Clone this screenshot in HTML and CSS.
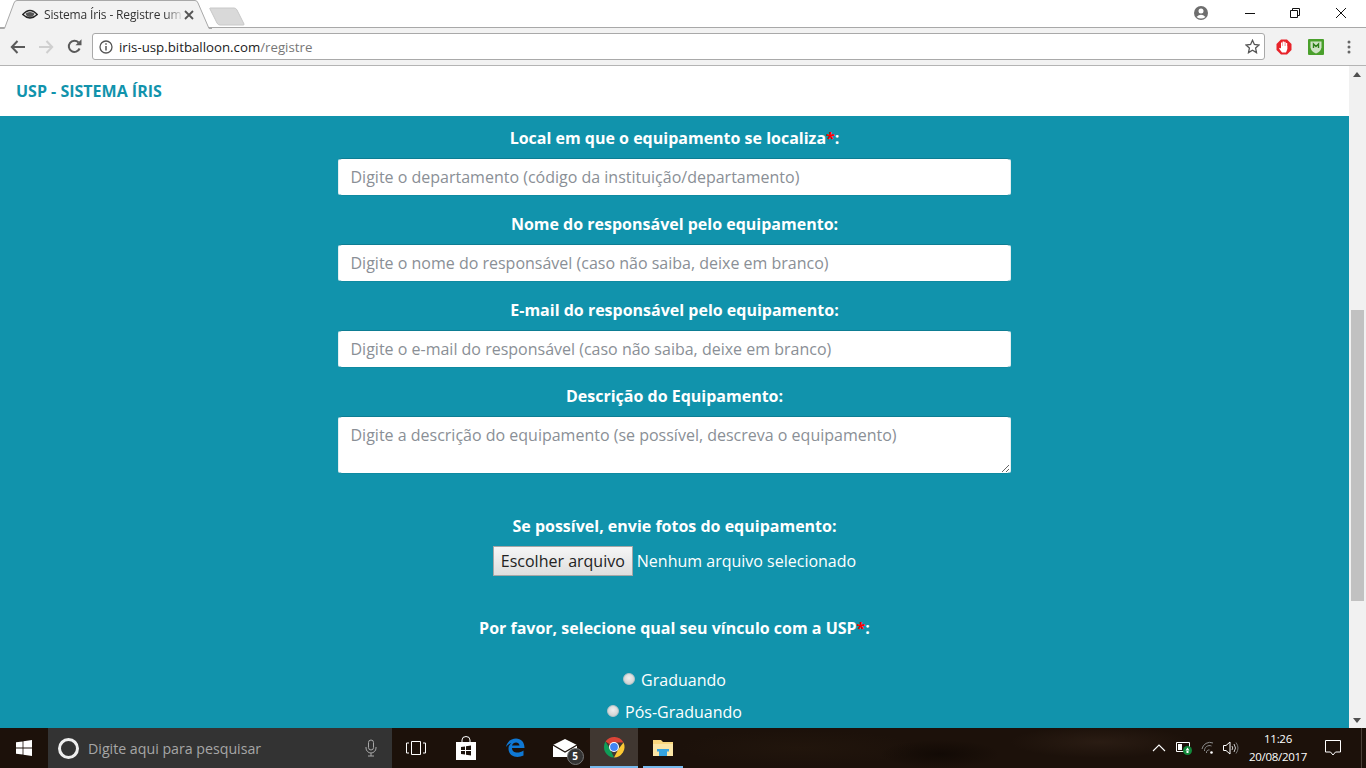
FILE: index.html
```html
<!DOCTYPE html>
<html lang="pt-BR">
<head>
  <meta charset="UTF-8">
  <title>Sistema Íris - Registre um equipamento</title>
  <link rel="stylesheet" href="styles.css">
</head>
<body>
  <header class="chrome">
    <div class="tabstrip">
      <div class="tab">
        <svg class="tab-shape" width="212" height="29" viewBox="0 0 212 29"><path d="M0 28.500h4.500L14 3q.8-2.500 3-2.500h178q2.200 0 3 2.500l11 25.500h3" fill="#f2f2f2" stroke="#a8a8a8"/></svg>
        <svg class="favicon" width="16" height="11" viewBox="0 0 16 11"><path d="M.8 5.500q7.200-8 14.400 0q-7.200 7-14.400 0z" fill="none" stroke="#222" stroke-width="1.400"/><path d="M3.500 4.500q4.500-3 9 0q-1 3.500-4.500 3.500t-4.500-3.500z" fill="#555"/></svg>
        <span class="tab-title">Sistema Íris - Registre um</span>
        <svg class="tab-close" width="10" height="10" viewBox="0 0 10 10"><path d="M1 1l8 8M9 1l-8 8" stroke="#555" stroke-width="1.800"/></svg>
      </div>
      <svg class="newtab" width="36" height="19" viewBox="0 0 36 19"><path d="M1 1h24q2 0 3 2l7 14q.5 1-1 1H11q-2 0-3-2L1 2q-.5-1 0-1z" fill="#d9d9d9" stroke="#c8c8c8"/></svg>
      <div class="win-controls">
        <svg class="win-user" width="16" height="16" viewBox="0 0 16 16"><circle cx="8" cy="8" r="7" fill="#6e6e6e"/><circle cx="8" cy="6" r="2.500" fill="#fff"/><path d="M3.500 12q4.500-4.500 9 0q-4.500 3-9 0z" fill="#fff"/></svg>
        <svg class="win-btn" width="10" height="10" viewBox="0 0 10 10"><path d="M0 5.500h10" stroke="#111"/></svg>
        <svg class="win-btn" width="10" height="10" viewBox="0 0 10 10"><path d="M.5 2.500h7v7h-7zM2.500 2.500v-2h7v7h-2" fill="none" stroke="#111"/></svg>
        <svg class="win-btn win-close" width="10" height="10" viewBox="0 0 10 10"><path d="M0 0l10 10M10 0L0 10" stroke="#111"/></svg>
      </div>
    </div>
    <div class="toolbar">
      <svg class="nav-icon" width="16" height="14" viewBox="0 0 16 14"><path d="M15 7H2M7.500 1L1.800 7l5.700 6" fill="none" stroke="#5a5a5a" stroke-width="2"/></svg>
      <svg class="nav-icon" width="16" height="14" viewBox="0 0 16 14"><path d="M1 7h13M8.500 1l5.700 6-5.700 6" fill="none" stroke="#cfcfcf" stroke-width="2"/></svg>
      <svg class="nav-icon nav-reload" width="15" height="15" viewBox="0 0 15 15"><path d="M12.600 9.500A5.600 5.600 0 1 1 11.500 3.500" fill="none" stroke="#5a5a5a" stroke-width="2"/><path d="M8.500 6.300h6v-6z" fill="#5a5a5a"/></svg>
      <div class="omnibox">
        <svg class="info-icon" width="14" height="14" viewBox="0 0 14 14"><circle cx="7" cy="7" r="6" fill="none" stroke="#555" stroke-width="1.300"/><path d="M7 6v4.500M7 3.300v1.500" stroke="#555" stroke-width="1.500"/></svg>
        <span class="url">iris-usp.bitballoon.com<span class="url-path">/registre</span></span>
        <svg class="star" width="15" height="15" viewBox="0 0 15 15"><path d="M7.500 1.300l1.900 4.200 4.600.5-3.400 3.100.9 4.500-4-2.300-4 2.300.9-4.500L1 6l4.600-.5z" fill="none" stroke="#555" stroke-width="1.300"/></svg>
      </div>
      <svg class="ext-stop" width="16" height="16" viewBox="0 0 16 16"><path d="M5 .5h6L15.500 5v6L11 15.500H5L.5 11V5z" fill="#e8232a"/><rect x="5" y="3.500" width="1.400" height="6" fill="#fff"/><rect x="6.600" y="2.500" width="1.400" height="6" fill="#fff"/><rect x="8.200" y="2.800" width="1.400" height="6" fill="#fff"/><rect x="9.800" y="4" width="1.400" height="6" fill="#fff"/><path d="M5 7h6.200v3.500L10 13.500H6L3 9.500l1-.8L5 9.500z" fill="#fff"/></svg>
      <svg class="ext-shield" width="16" height="16" viewBox="0 0 16 16"><rect width="16" height="16" rx="1" fill="#4aa02c"/><path d="M2.500 2.500h11v6q-1 4.500-5.500 6q-4.500-1.500-5.500-6z" fill="#cfe3c6"/><path d="M5.500 9V5l2.500 2.500L10.500 5v4" fill="none" stroke="#2f7f1c" stroke-width="1.400"/></svg>
      <svg class="menu-dots" width="4" height="14" viewBox="0 0 4 14"><circle cx="2" cy="2" r="1.500" fill="#666"/><circle cx="2" cy="7" r="1.500" fill="#666"/><circle cx="2" cy="12" r="1.500" fill="#666"/></svg>
    </div>
  </header>

  <div class="viewport">
    <main class="page">
      <nav class="navbar"><a class="brand" href="#">USP - SISTEMA ÍRIS</a></nav>
      <form class="register">
        <div class="field">
          <label>Local em que o equipamento se localiza<span class="req">*</span>:</label>
          <input class="form-control" type="text" placeholder="Digite o departamento (código da instituição/departamento)">
        </div>
        <div class="field">
          <label>Nome do responsável pelo equipamento:</label>
          <input class="form-control" type="text" placeholder="Digite o nome do responsável (caso não saiba, deixe em branco)">
        </div>
        <div class="field">
          <label>E-mail do responsável pelo equipamento:</label>
          <input class="form-control" type="text" placeholder="Digite o e-mail do responsável (caso não saiba, deixe em branco)">
        </div>
        <div class="field">
          <label>Descrição do Equipamento:</label>
          <textarea class="form-control area" placeholder="Digite a descrição do equipamento (se possível, descreva o equipamento)"></textarea>
        </div>
        <div class="field photos">
          <label>Se possível, envie fotos do equipamento:</label>
          <div class="file-row">
            <button class="file-btn" type="button">Escolher arquivo</button>
            <span>Nenhum arquivo selecionado</span>
          </div>
        </div>
        <div class="field bond">
          <label>Por favor, selecione qual seu vínculo com a USP<span class="req">*</span>:</label>
          <div class="radio-row"><input class="radio" type="radio" name="vinculo"><span>Graduando</span></div>
          <div class="radio-row"><input class="radio" type="radio" name="vinculo"><span>Pós-Graduando</span></div>
        </div>
      </form>
    </main>
    <aside class="scrollbar">
      <span class="arrow-up"></span>
      <div class="thumb"></div>
      <span class="arrow-down"></span>
    </aside>
  </div>

  <footer class="taskbar">
    <div class="start">
      <svg width="16" height="16" viewBox="0 0 16 16"><path d="M0 2.300l6.600-.9v6.200H0zM7.400 1.300L16 0v7.600H7.400zM0 8.400h6.600v6.200L0 13.700zM7.400 8.400H16V16l-8.600-1.300z" fill="#fff"/></svg>
    </div>
    <div class="search">
      <span class="cortana"></span>
      <span class="search-text">Digite aqui para pesquisar</span>
      <svg class="mic" width="12" height="18" viewBox="0 0 12 18"><rect x="3.500" y="1" width="5" height="10" rx="2.500" fill="none" stroke="#a8a8a8"/><path d="M1 8v1a5 5 0 0 0 10 0V8M6 14v3M3 17h6" fill="none" stroke="#a8a8a8"/></svg>
    </div>
    <div class="task-icons">
      <div class="task-item"><svg width="20" height="14" viewBox="0 0 20 14"><path d="M5.500.5h9v13h-9zM3 2H.5v10H3M17 2h2.500v10H17" fill="none" stroke="#fff"/></svg></div>
      <div class="task-item"><svg width="22" height="24" viewBox="0 0 22 24"><path d="M1 6h20v18H1z" fill="#fff"/><path d="M7 6V4q0-3.500 4-3.500T15 4v2" fill="none" stroke="#fff"/><path d="M6 11l4-.6V14H6zM11 10.300l5-.7V14h-5zM6 15h4v3.600L6 18zM11 15h5v4.400l-5-.7z" fill="#1c130d"/></svg></div>
      <div class="task-item"><svg width="20" height="20" viewBox="0 0 20 20"><path d="M1 9C2 3 7 .5 11 .5c5 0 8.500 3.500 8.500 9.500H7c0 5 6.500 6 11.500 2.500v5c-6 3-15 1.500-15-7C3.500 8 4.500 6.500 6.500 5 4 5.500 2.500 7 1 9zM7 7.500h7.500C14.300 3.500 8 3.500 7 7.500z" fill="#0f78d4"/></svg></div>
      <div class="task-item mail">
        <svg width="24" height="18" viewBox="0 0 24 18"><path d="M0 6L12 0l12 6v12H0z" fill="#fff"/><path d="M0 6l12 7 12-7" fill="none" stroke="#1c130d" stroke-width="1.200"/></svg>
        <span class="badge">5</span>
      </div>
      <div class="task-item app-active">
        <svg width="22" height="22" viewBox="0 0 22 22"><path d="M11 11L2.500 5.500A10.500 10.500 0 0 1 20.500 6.500H11z" fill="#db4437"/><path d="M11 21.500A10.500 10.500 0 0 1 2.500 5.500L7 13z" fill="#0f9d58"/><path d="M20.500 6.500A10.500 10.500 0 0 1 11 21.500L15.500 13z" fill="#fcc934"/><circle cx="11" cy="11" r="5" fill="#fff"/><circle cx="11" cy="11" r="3.900" fill="#4285f4"/></svg>
      </div>
      <div class="task-item app-open">
        <svg width="22" height="18" viewBox="0 0 22 18"><path d="M1 3V1h8l2 2h10v14H1z" fill="#f9d77e"/><path d="M1 5h20v12H1z" fill="#fbe6a6"/><path d="M7 11h8v6H7z" fill="#35a4e0"/><path d="M5 10h12v2.500H5z" fill="#35a4e0"/></svg>
      </div>
    </div>
    <div class="tray">
      <svg class="tray-up" width="14" height="8" viewBox="0 0 14 8"><path d="M1 7l6-6 6 6" fill="none" stroke="#fff" stroke-width="1.100"/></svg>
      <svg class="tray-battery" width="17" height="14" viewBox="0 0 17 14"><path d="M.5 1.500h13v9H.5z" fill="none" stroke="#fff"/><path d="M2 3h4v6H2z" fill="#fff"/><circle cx="11.500" cy="9.500" r="4.500" fill="#12893b"/><path d="M11.500 6.500l-2 3h4zM10.500 10h2v2h-2z" fill="#fff"/></svg>
      <svg class="tray-wifi" width="14" height="14" viewBox="0 0 14 14"><path d="M1 8a8 8 0 0 1 11-6M3.500 10a5 5 0 0 1 7-5M5.500 12a2.500 2.500 0 0 1 3-3" fill="none" stroke="#8d8d8d"/><circle cx="10.500" cy="11.500" r="1.300" fill="#fff"/></svg>
      <svg class="tray-sound" width="16" height="14" viewBox="0 0 16 14"><path d="M.5 4.500h2.500L7 1v12L3 9.500H.5z" fill="none" stroke="#fff"/><path d="M9 5q1.500 2 0 4M11 3q3 4 0 8" fill="none" stroke="#ccc"/><path d="M13 1.500q4 5.500 0 11" fill="none" stroke="#777"/></svg>
      <div class="clock"><span>11:26</span><span>20/08/2017</span></div>
      <svg class="notify" width="16" height="16" viewBox="0 0 16 16"><path d="M.5.500h15v11.500h-5L8 15l-2.500-3H.5z" fill="none" stroke="#fff"/></svg>
      <span class="show-desktop"></span>
    </div>
  </footer>
</body>
</html>
```

FILE: styles.css
```css
* {
  box-sizing: border-box;
}

html, body {
  height: 100%;
}

body {
  margin: 0;
  height: 768px;
  overflow: hidden;
  display: flex;
  flex-direction: column;
  font-family: "Open Sans", sans-serif;
  background: #fff;
}

/* browser */
.chrome {
  height: 66px;
  flex: none;
  background: #f2f2f2;
  border-bottom: 1px solid #b4b4b4;
}

.tabstrip {
  height: 28px;
  background: #fff;
  display: flex;
  position: relative;
  box-shadow: inset 0 -1px 0 #a8a8a8;
}

.tab {
  position: relative;
  width: 212px;
  flex: none;
  display: flex;
  align-items: center;
  padding-left: 22px;
  height: 29px;
}

.tab-shape {
  position: absolute;
  left: 0;
  top: 0;
}

.favicon, .tab-title, .tab-close {
  position: relative;
}

.tab-title {
  margin-left: 6px;
  font-size: 12px;
  letter-spacing: -.15px;
  color: #333;
  white-space: nowrap;
  -webkit-mask-image: linear-gradient(to right, #000 88%, rgba(0,0,0,.15));
  mask-image: linear-gradient(to right, #000 88%, rgba(0,0,0,.15));
}

.tab-close {
  position: absolute;
  left: 184px;
  top: 10px;
}

.newtab {
  margin: 7px 0 0 -3px;
}

.win-controls {
  margin-left: auto;
  display: flex;
  align-items: center;
  height: 26px;
  padding-right: 20px;
}

.win-btn {
  margin-left: 35px;
}

.win-user + .win-btn {
  margin-left: 36px;
}

.win-close {
  margin-left: 36px;
}

.toolbar {
  height: 37px;
  display: flex;
  align-items: center;
  padding: 0 12px 0 10px;
}

.nav-icon {
  margin-right: 12px;
  flex: none;
}

.nav-reload {
  margin-left: 1px;
  margin-right: 10px;
}

.omnibox {
  width: 1173px;
  height: 27px;
  background: #fff;
  border: 1px solid #a9a9a9;
  border-radius: 3px;
  display: flex;
  align-items: center;
  padding: 0 4px 0 6px;
  flex: none;
}

.url {
  margin-left: 6px;
  font-size: 13.25px;
  color: #222;
  flex: 1;
}

.url-path {
  color: #777;
}

.ext-stop {
  margin-left: 11px;
}

.ext-shield {
  margin-left: 16px;
}

.menu-dots {
  margin-left: 23px;
}

/* pagina */
.viewport {
  flex: 1;
  min-height: 0;
  display: flex;
}

.page {
  flex: 1;
  min-width: 0;
  overflow: hidden;
  background: #1193ac;
}

.navbar {
  height: 50px;
  background: #fff;
  display: flex;
  align-items: center;
  padding-left: 16px;
}

.brand {
  color: #1193ac;
  font-size: 16px;
  font-weight: 700;
  text-decoration: none;
}

.register {
  width: 673px;
  margin: 0 auto;
  padding-top: 11px;
  color: #fff;
  font-size: 16px;
  text-align: center;
}

.field {
  margin-bottom: 17px;
}

.field label {
  display: block;
  font-weight: 700;
  line-height: 22px;
  margin-bottom: 9px;
}

.req {
  color: #f00;
}

.form-control {
  display: block;
  width: 100%;
  height: 38px;
  padding: 6px 12px 6px 11.5px;
  font: 16px/24px "Open Sans", sans-serif;
  color: #555;
  background: #fff;
  border: 1px solid #e4eef0;
  border-top-color: #0d7d93;
  border-bottom-color: #0f8aa1;
  border-radius: 4px;
  outline: none;
}

.form-control::placeholder {
  color: #8a8f96;
  opacity: 1;
}

.area {
  height: 58px;
  resize: vertical;
}

.photos {
  margin-top: 41px;
}

.file-row {
  display: flex;
  justify-content: center;
  align-items: center;
  gap: 4px;
}

.file-btn {
  height: 30px;
  width: 140px;
  padding: 0;
  font: 16px "Open Sans", sans-serif;
  color: #222;
  background: linear-gradient(#f6f6f6, #dedede);
  border: 1px solid #a6a6a6;
}

.bond {
  margin-top: 41px;
}

.bond label {
  margin-bottom: 25px;
}

.radio-row {
  height: 32px;
  display: flex;
  justify-content: center;
  align-items: center;
  gap: 6px;
}

.radio {
  appearance: none;
  -webkit-appearance: none;
  width: 12px;
  height: 12px;
  margin: 0 0 3px;
  border-radius: 50%;
  background: radial-gradient(circle at 50% 40%, #f0f0f0, #c8c8c8);
  border: 1px solid #b8c4c8;
}

/* barra de rolagem */
.scrollbar {
  width: 17px;
  flex: none;
  background: #f1f1f1;
  position: relative;
}

.arrow-up, .arrow-down {
  position: absolute;
  left: 4px;
  width: 0;
  height: 0;
  border-left: 4px solid transparent;
  border-right: 4px solid transparent;
}

.arrow-up {
  top: 6px;
  border-bottom: 5px solid #505050;
}

.arrow-down {
  bottom: 5px;
  border-top: 5px solid #505050;
}

.thumb {
  position: absolute;
  left: 2px;
  top: 244px;
  width: 13px;
  height: 291px;
  background: #c1c1c1;
}

/* barra de tarefas */
.taskbar {
  height: 40px;
  flex: none;
  display: flex;
  align-items: center;
  color: #fff;
  background:
    radial-gradient(ellipse 60px 14px at 940px 26px, #120a05, transparent),
    radial-gradient(ellipse 90px 16px at 1100px 14px, #2a1c13, transparent),
    radial-gradient(ellipse 120px 18px at 800px 20px, #21150c, transparent),
    #1c110a;
}

.start {
  width: 48px;
  height: 40px;
  display: flex;
  align-items: center;
  justify-content: center;
}

.search {
  width: 344px;
  height: 40px;
  background: #333;
  display: flex;
  align-items: center;
  padding-left: 10px;
}

.cortana {
  width: 21px;
  height: 21px;
  border: 3px solid #eee;
  border-radius: 50%;
}

.search-text {
  margin-left: 9px;
  font-size: 14.2px;
  color: #a6a6a6;
  flex: 1;
}

.mic {
  margin-right: 15px;
}

.task-icons {
  display: flex;
  gap: 1.5px;
  height: 40px;
}

.task-item {
  width: 48px;
  height: 40px;
  display: flex;
  align-items: center;
  justify-content: center;
  position: relative;
}

.app-active {
  background: rgba(255,255,255,.16);
  border-bottom: 2px solid #76b9ed;
}

.app-open {
  margin-left: 3.5px;
  box-shadow: inset 0 -2px 0 #76b9ed;
  width: 40px;
}

.badge {
  position: absolute;
  right: 5px;
  bottom: 3px;
  width: 17px;
  height: 17px;
  border-radius: 50%;
  background: #333;
  border: 1px solid #777;
  font-size: 10px;
  font-weight: 700;
  line-height: 15px;
  text-align: center;
}

.tray {
  margin-left: auto;
  display: flex;
  align-items: center;
  height: 40px;
  padding-right: 4px;
}

.tray-up {
  margin-right: 10px;
}

.tray-battery {
  margin-right: 8px;
}

.tray-wifi {
  margin-right: 8px;
}

.clock {
  margin: 0 17px 0 9px;
  width: 60px;
  display: flex;
  flex-direction: column;
  align-items: center;
  font-size: 11.5px;
  letter-spacing: -.3px;
  line-height: 18px;
}

.show-desktop {
  width: 1px;
  height: 40px;
  margin-left: 20px;
  background: #4a4038;
}
```
